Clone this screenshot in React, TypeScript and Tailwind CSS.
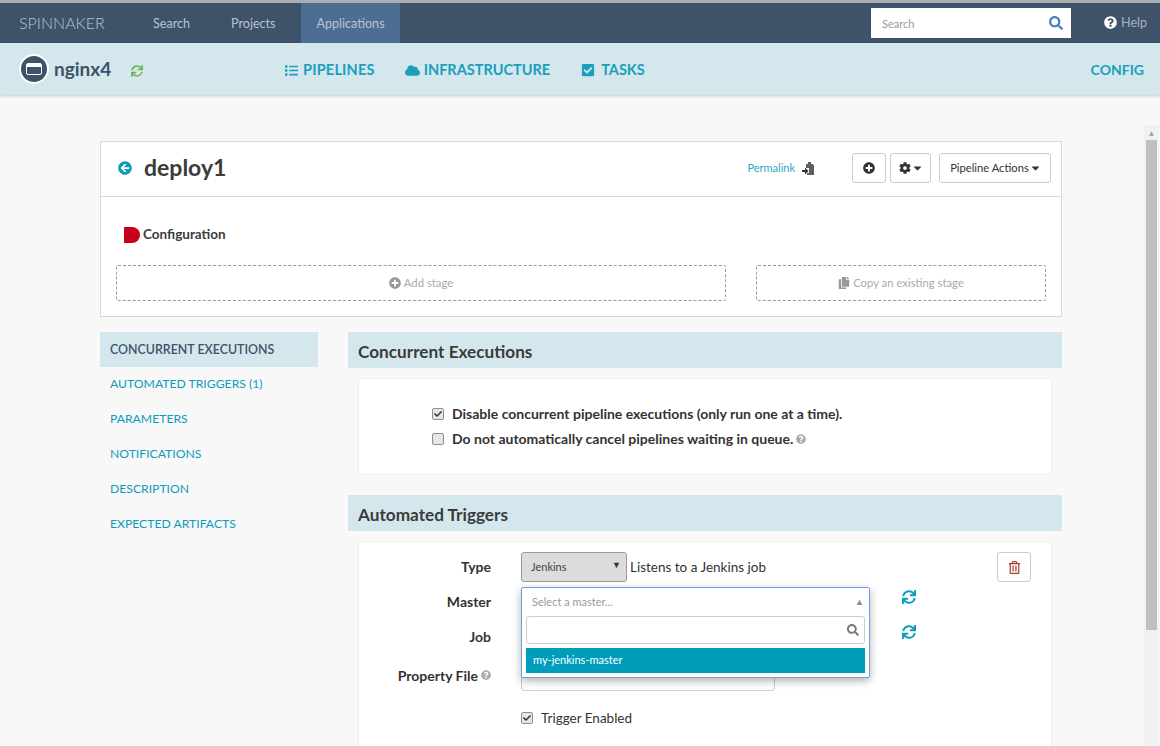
import { FaSearch, FaQuestionCircle, FaList, FaCloud, FaCheckSquare, FaSync, FaArrowCircleLeft, FaPlusCircle, FaCog, FaCopy, FaCaretDown, FaCheck, FaRegTrashAlt } from "react-icons/fa";

const sideItems = ["AUTOMATED TRIGGERS (1)", "PARAMETERS", "NOTIFICATIONS", "DESCRIPTION", "EXPECTED ARTIFACTS"];

const Checkbox = ({ checked }: { checked?: boolean }) => (
  <span className="flex h-[12px] w-[12px] shrink-0 items-center justify-center rounded-[2px] border border-[#8f8f8f] bg-[#e6e6e6] text-[#333]">
    {checked && <FaCheck className="h-[8px] w-[8px]" />}
  </span>
);

const SectionHeader = ({ title }: { title: string }) => (
  <div className="flex h-[36px] items-center bg-[#d4e7ed] pl-[10px] pt-[3px] text-[17.2px] font-bold text-[#3b3b3b]">{title}</div>
);

const Label = ({ children }: { children: React.ReactNode }) => (
  <div className="flex w-[132px] items-center justify-end gap-[3px] pb-[2px] text-[14px] font-bold text-[#333]">{children}</div>
);

const PermalinkIcon = () => (
  <svg viewBox="0 0 13 13" className="block h-[13px] w-[13px]">
    <path d="M4 2h2V0h3v2h2v1h1v10H5v-2h2V6H4z" fill="#5f5f5f" />
    <path d="M0 8h3V5.5L6.5 9 3 12.500V10H0z" fill="#333" />
  </svg>
);

export default function App() {
  return (
    <div className="h-[746px] w-[1160px] overflow-hidden bg-[#f8f8f8] font-['Lato','Noto_Sans',sans-serif] text-[#333]">
      <div className="h-[3px] bg-[#a9acb0]" />
      <nav className="flex h-[40px] items-center bg-[#3e5269] text-[12.6px] text-[#b9c3ce]">
        <div className="w-[153px] pl-[19px] text-[16px] font-light">SPINNAKER</div>
        <div className="w-[78px] pt-[3px]">Search</div>
        <div className="w-[70px] pt-[3px]">Projects</div>
        <div className="flex h-full w-[99px] items-center justify-center bg-[#4e6d93] pt-[3px]">Applications</div>
        <div className="ml-[471px] flex h-[30px] w-[200px] items-center justify-between bg-white pl-[11px] pr-[8px] text-[11px] text-[#999]">
          <span className="pt-[2px]">Search</span>
          <FaSearch className="h-[14px] w-[14px] text-[#4b7fc4]" />
        </div>
        <div className="ml-[33px] flex items-center gap-[4px] text-[#a7b1bc]">
          <FaQuestionCircle className="h-[13px] w-[13px] text-white" />
          Help
        </div>
      </nav>
      <div className="flex h-[52px] items-center bg-[#d4e7ed] shadow-[0_1px_3px_rgba(0,0,0,0.2)]">
        <div className="ml-[19px] flex h-[30px] w-[30px] items-center justify-center rounded-full border-2 border-white bg-[#3e5269]">
          <span className="flex h-[12px] w-[16px] flex-col rounded-[2px] border border-white bg-[#3e5269]">
            <span className="h-[3px] bg-white" />
          </span>
        </div>
        <div className="ml-[5px] w-[77px] pt-px text-[19px] font-bold text-[#3e5269]">nginx4</div>
        <FaSync className="mt-[4px] h-[12px] w-[12px] text-[#6cb85c]" />
        <div className="ml-[142px] flex items-center pt-[2px] text-[14.5px] font-bold text-[#1a9fbb]">
          <FaList className="h-[13px] w-[13px]" />
          <span className="ml-[5px] tracking-[0.2px]">PIPELINES</span>
          <FaCloud className="ml-[30px] h-[15px] w-[15px]" />
          <span className="ml-[4px]">INFRASTRUCTURE</span>
          <FaCheckSquare className="ml-[31px] h-[14px] w-[14px]" />
          <span className="ml-[6px]">TASKS</span>
        </div>
        <div className="ml-auto pr-[16px] text-[14px] font-bold text-[#1a9fbb]">CONFIG</div>
      </div>

      <div className="flex">
        <main className="w-[1144px] pl-[100px] pr-[82px] pt-[46px]">
          <section className="border border-[#d9d9d9] bg-white">
            <div className="flex h-[55px] items-center border-b border-[#d9d9d9] pb-[2px] pl-[17px] pr-[10px]">
              <FaArrowCircleLeft className="h-[14px] w-[14px] text-[#0d9cba]" />
              <h1 className="mb-[2px] ml-[12px] text-[23px] font-bold text-[#3b3b3b]">deploy1</h1>
              <a className="ml-auto text-[11px] text-[#2fa9c4]">Permalink</a>
              <span className="ml-[7px]"><PermalinkIcon /></span>
              <button className="ml-[37px] flex h-[30px] w-[34px] items-center justify-center rounded-[3px] border border-[#ccc] bg-white">
                <FaPlusCircle className="h-[12px] w-[12px] text-[#333]" />
              </button>
              <button className="ml-[4px] flex h-[30px] w-[41px] items-center justify-center gap-[2px] rounded-[3px] border border-[#ccc] bg-white">
                <FaCog className="h-[12px] w-[12px] text-[#333]" />
                <FaCaretDown className="h-[12px] w-[9px] text-[#333]" />
              </button>
              <button className="ml-[8px] flex h-[30px] w-[112px] items-center justify-center gap-[2px] rounded-[3px] border border-[#ccc] bg-white text-[11.2px] text-[#333]">
                Pipeline Actions
                <FaCaretDown className="h-[12px] w-[9px]" />
              </button>
            </div>
            <div className="px-[15px] pb-[15px]">
              <div className="flex h-[68px] items-center pl-[8px] pt-[7px] text-[13.5px] font-bold text-[#3b3b3b]">
                <span className="h-[16px] w-[16px] rounded-r-full bg-[#c8001a]" />
                <span className="ml-[3px]">Configuration</span>
              </div>
              <div className="flex justify-between">
                <div className="flex h-[36px] w-[610px] items-center justify-center gap-[3px] rounded-[2px] border border-dashed border-[#999] text-[11.3px] text-[#aaa]">
                  <FaPlusCircle className="h-[12px] w-[12px] text-[#999]" />
                  Add stage
                </div>
                <div className="flex h-[36px] w-[290px] items-center justify-center gap-[3px] rounded-[2px] border border-dashed border-[#999] text-[11.3px] text-[#aaa]">
                  <FaCopy className="h-[12px] w-[12px] text-[#999]" />
                  Copy an existing stage
                </div>
              </div>
            </div>
          </section>

          <div className="mt-[15px] flex">
            <aside className="w-[218px] shrink-0 text-[12.2px] text-[#0d9cba]">
              <div className="flex h-[35px] items-center bg-[#d4e7ed] pl-[10px] pt-[2px] text-[12.4px] font-semibold text-[#3e5269]">CONCURRENT EXECUTIONS</div>
              {sideItems.map((item) => (
                <div key={item} className="flex h-[35px] items-center pl-[10px]">{item}</div>
              ))}
            </aside>
            <div className="ml-[30px] min-w-0 flex-1">
              <SectionHeader title="Concurrent Executions" />
              <div className="mx-[10px] mt-[10px] h-[97px] rounded-[2px] border border-[#eee] bg-white pl-[73px] pt-[26px] text-[14px] font-bold leading-[17px] text-[#333]">
                <div className="flex items-center gap-[8px]">
                  <Checkbox checked />
                  Disable concurrent pipeline executions (only run one at a time).
                </div>
                <div className="mt-[8px] flex items-center gap-[8px]">
                  <Checkbox />
                  Do not automatically cancel pipelines waiting in queue.
                  <FaQuestionCircle className="-ml-[5px] h-[10px] w-[10px] text-[#aaa]" />
                </div>
              </div>
              <div className="mt-[20px]">
                <SectionHeader title="Automated Triggers" />
              </div>
              <div className="mx-[10px] mt-[10px] h-[300px] rounded-[2px] border border-[#eee] bg-white pt-[10px]">
                <div className="flex">
                  <div className="w-[638px]">
                    <div className="flex h-[30px]">
                      <Label>Type</Label>
                      <div className="ml-[30px] flex w-[106px] items-center justify-between rounded-[3px] border border-[#999] bg-[#dcdcdc] pl-[9px] pr-[5px] text-[11px] text-[#444]">
                        Jenkins
                        <span className="mb-[4px] text-[9px] text-[#333]">▼</span>
                      </div>
                      <div className="ml-[3px] flex items-center text-[13.5px] text-[#333]">Listens to a Jenkins job</div>
                    </div>
                    <div className="relative mt-[5px] h-[117px]">
                      <div className="flex h-[30px]"><Label>Master</Label></div>
                      <div className="mt-[5px] flex h-[30px]"><Label>Job</Label></div>
                      <div className="mt-[9px] flex h-[30px]">
                        <Label>
                          Property File
                          <FaQuestionCircle className="h-[10px] w-[10px] text-[#aaa]" />
                        </Label>
                        <div className="ml-[30px] mt-[5px] h-[25px] w-[254px] rounded-[3px] border border-[#ccc] bg-white" />
                      </div>
                      <div className="absolute left-[162px] top-0 h-[91px] w-[349px] rounded-[2px] border border-[#6ea0dc] bg-white px-[4px] shadow-[0_3px_8px_rgba(0,0,0,0.3)]">
                        <div className="flex h-[28px] items-center justify-between pl-[6px] pr-[1px] text-[11px] text-[#999]">
                          Select a master...
                          <span className="text-[9px] text-[#888]">▲</span>
                        </div>
                        <div className="flex h-[28px] items-center justify-end rounded-[3px] border border-[#ccc] pr-[5px]">
                          <FaSearch className="h-[12px] w-[12px] text-[#777]" />
                        </div>
                        <div className="mt-[4px] flex h-[25px] items-center bg-[#009dbb] pl-[7px] text-[11px] text-white">my-jenkins-master</div>
                      </div>
                      <FaSync className="absolute left-[543px] top-[3px] h-[14px] w-[14px] text-[#0d9cba]" />
                      <FaSync className="absolute left-[543px] top-[38px] h-[14px] w-[14px] text-[#0d9cba]" />
                    </div>
                    <div className="mt-[4px] flex items-center gap-[8px] pl-[162px] text-[13.5px] text-[#333]">
                      <Checkbox checked />
                      Trigger Enabled
                    </div>
                  </div>
                  <button className="flex h-[30px] w-[34px] items-center justify-center rounded-[3px] border border-[#ccc] bg-white">
                    <FaRegTrashAlt className="h-[13px] w-[13px] text-[#a5412a]" />
                  </button>
                </div>
              </div>
            </div>
          </div>
        </main>
        <div className="mt-[30px] flex h-[621px] w-[15px] shrink-0 flex-col items-center bg-[#f1f1f1]">
          <span className="flex h-[15px] items-center text-[8px] text-[#a3a3a3]">▲</span>
          <div className="h-[490px] w-[11px] bg-[#bfbfbf]" />
        </div>
      </div>
    </div>
  );
}
